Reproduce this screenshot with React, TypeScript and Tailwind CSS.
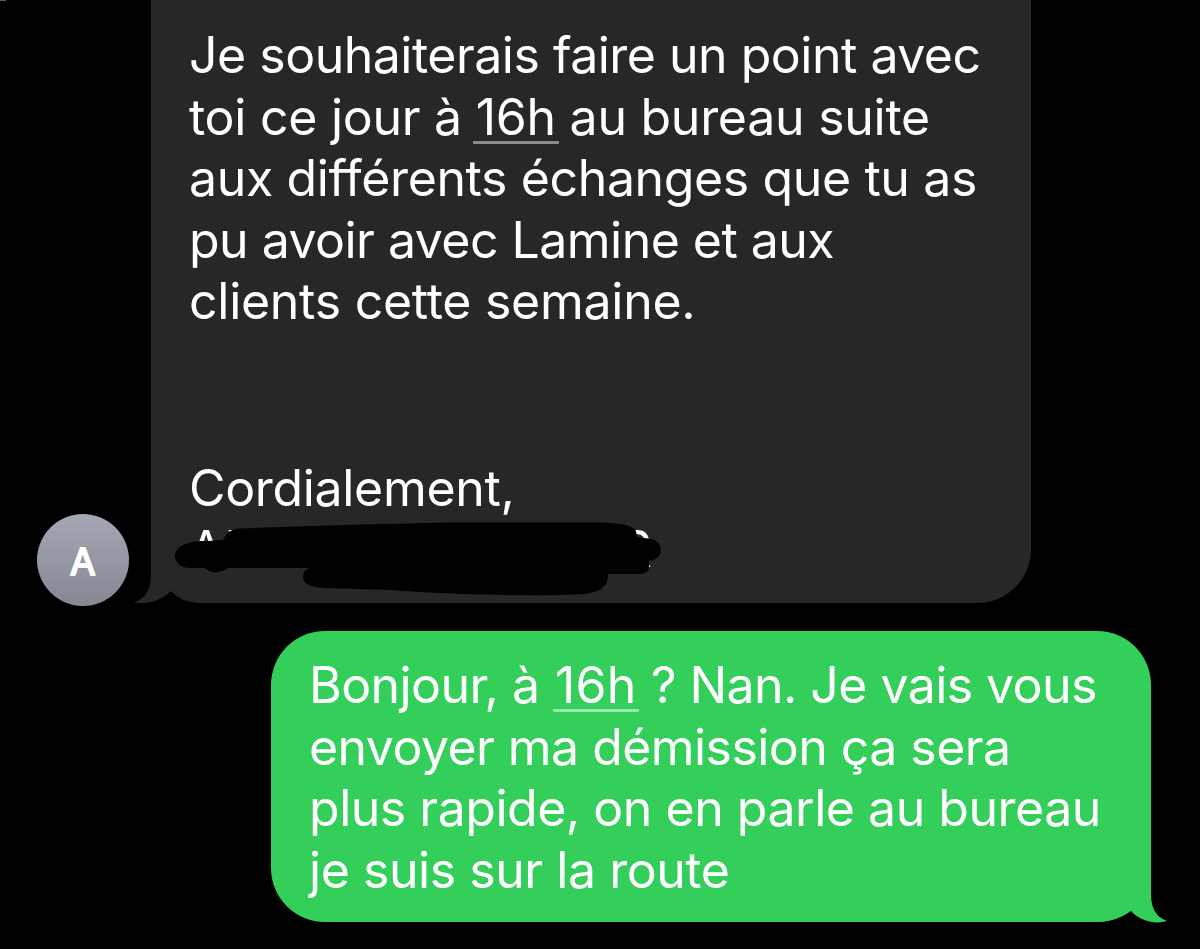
import React from "react";

type LineProps = { className?: string; children?: React.ReactNode };

function Line({ className = "", children }: LineProps) {
  return (
    <div className="h-[61.5px] whitespace-pre leading-[61.5px]">
      <span className={className}>{children}</span>
    </div>
  );
}

function Time({ className = "", underline }: { className?: string; underline: string }) {
  return (
    <span className={`relative ${className}`}>
      16h
      <span className={`absolute bottom-[3px] h-[3px] w-[86px] ${underline}`} />
    </span>
  );
}

function Avatar() {
  return (
    <div className="mt-[514px] size-[92px] shrink-0 rounded-full bg-linear-to-b from-[#a5a8b4] to-[#858792]">
      <svg viewBox="0 0 92 92" className="size-full">
        <text
          x="45.8"
          y="61"
          textAnchor="middle"
          fill="#fff"
          stroke="#fff"
          strokeWidth="2"
          strokeLinejoin="round"
          className="font-['Inter',sans-serif] text-[37px] font-normal"
        >
          A
        </text>
      </svg>
    </div>
  );
}

function Scribble() {
  return (
    <svg
      viewBox="170 515 500 85"
      className="absolute left-[19px] top-[515px] h-[85px] w-[500px]"
      fill="#030001"
    >
      <path d="M189 543 C194 541 200 541 207 541 L223 540 C227 531 232 529 242 528.500 C300 526 380 524 450 522.500 H600 C620 523 632 525 636 531 L637 537 C642 538 647 538 651 539 C658 541 661 545 661 550 C661 556 656 560 649 561 V568 C648 572 645 574 639 574 H608 C609 586 600 592 585 594 C530 597 440 594 390 590 L325 588 C310 587 303 584 303 577 C303 572 305 570 309 568 H228 C222 573 210 574 205 568 H190 C180 568 175 562 175 556 C175 550 180 545 189 543 Z" />
    </svg>
  );
}

export default function App() {
  return (
    <main className="relative h-[949px] w-[1200px] overflow-hidden bg-black font-['Inter',sans-serif] text-[50px] text-white">
      <span className="absolute left-0 top-0 h-px w-[6px] bg-[#56605c]" />
      <div className="flex h-[631px] items-start pl-[37px]">
        <Avatar />
        <section className="relative ml-[22px] h-[603px] w-[880px] rounded-br-[54px] bg-[#272729] pl-[38px] pt-[25px]">
          <svg
            viewBox="130 560 70 46"
            className="absolute -left-[21px] top-[560px] h-[46px] w-[70px]"
          >
            <path d="M130 560 H151 V603 H200 V606 H130 Z" fill="#000" />
            <path d="M151 560 V574 C151 589 146 598 134 602.500 C149 605 162 600 170.500 591 C178 598 187 603 200 603 V560 Z" fill="#272729" />
            <path d="M134 603 C149 605 162 600 170.500 591 C178 598 187 603 200 603 V606 H134 Z" fill="#000" />
          </svg>
          <Line className="tracking-[-0.5px]">Je souhaiterais faire un point avec</Line>
          <Line className="tracking-[-0.27px]">
            toi ce jour à <Time underline="-left-[3px] bg-[#8a8a8c]" /> au bureau suite
          </Line>
          <Line className="tracking-[-0.38px]">aux différents échanges que tu as</Line>
          <Line className="tracking-[-0.53px]">pu avoir avec Lamine et aux</Line>
          <Line className="tracking-[-0.27px]">clients cette semaine.</Line>
          <Line />
          <Line />
          <div className="pt-[2px]">
            <Line className="tracking-[-0.33px]">Cordialement,</Line>
            <div className="flex h-[61.5px] w-[463px] justify-between leading-[61.5px]">
              <span className="tracking-[1.5px]">Al</span>
              <span>R</span>
            </div>
          </div>
          <Scribble />
        </section>
      </div>
      <section className="relative ml-[271px] h-[291px] w-[880px] rounded-[54px] bg-[#34ce5b] pl-[38px] pt-[24px]">
        <svg
          viewBox="1080 860 90 64"
          className="absolute left-[809px] top-[229px] h-[64px] w-[90px]"
        >
          <path d="M1080 860 H1151 V894 C1151 908 1156 917 1167 921 C1153 925 1139 920 1131 911 C1121 918 1109 922 1096 922 H1080 Z" fill="#34ce5b" />
        </svg>
        <Line className="tracking-[-0.57px]">
          Bonjour, à{" "}
          <Time
            className="ml-[2px] mr-[1px] tracking-[0.2px]"
            underline="-left-[2px] bg-[#9be7ae]"
          />{" "}
          ? Nan. Je vais vous
        </Line>
        <Line className="tracking-[-0.55px]">envoyer ma démission ça sera</Line>
        <Line className="tracking-[-0.48px]">plus rapide, on en parle au bureau</Line>
        <Line className="tracking-[-0.45px]">je suis sur la route</Line>
      </section>
    </main>
  );
}
